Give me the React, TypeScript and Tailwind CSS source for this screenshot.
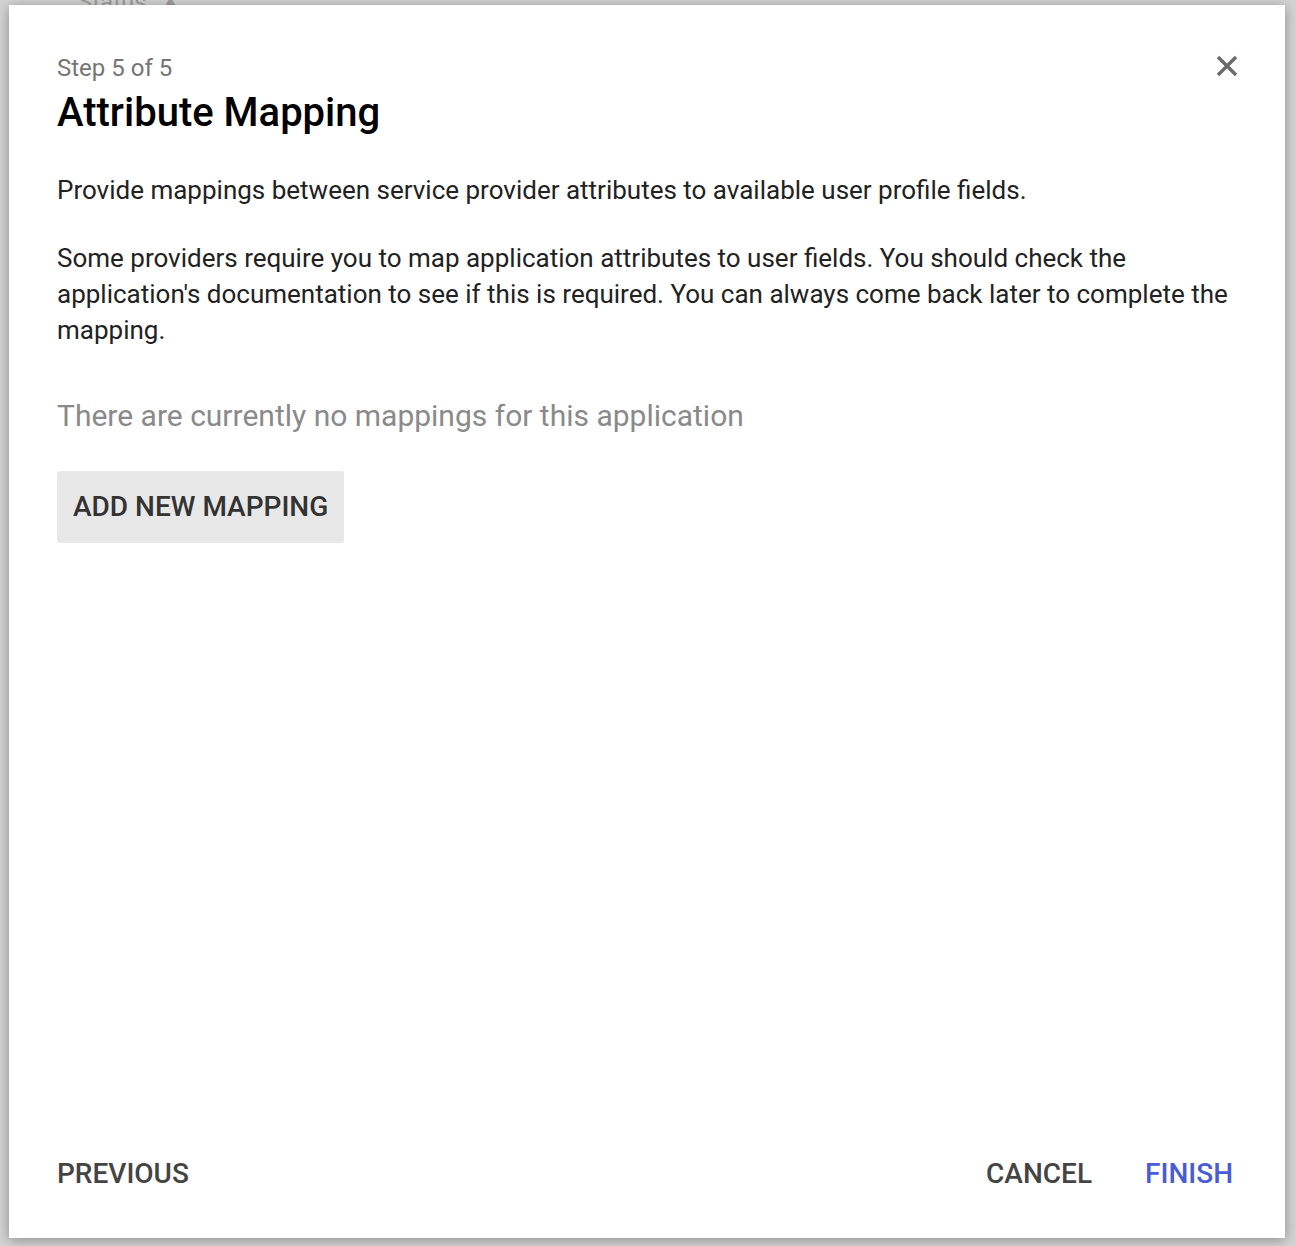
import React from "react";

export default function App() {
  return (
    <div className="w-[1296px] h-[1246px] bg-[#d4d4d4] relative overflow-hidden" style={{ fontFamily: "Roboto, 'Liberation Sans', sans-serif" }}>
      <div className="absolute left-[78px] -top-[16px] text-[24px] text-[#9e9e9e]">Status&nbsp;&nbsp;▲</div>
      <div className="absolute left-[9px] top-[5px] w-[1276px] h-[1233px] bg-white shadow-[0_2px_12px_rgba(0,0,0,0.35)] flex flex-col">
        <div className="flex items-start justify-between pl-[48px] pr-[48px] pt-[48px]">
          <div>
            <div className="text-[24px] leading-[30px] text-[#757575]">Step 5 of 5</div>
            <h1 className="mt-[7px] text-[40px] leading-[46px] font-medium text-black">Attribute Mapping</h1>
          </div>
          <button className="mt-[1px] -mr-[2px] text-[#6b6b6b] w-[24px] h-[24px] flex items-center justify-center">
            <svg width="24" height="24" viewBox="0 0 24 24" fill="none" stroke="currentColor" strokeWidth="3.4" strokeLinecap="butt">
              <path d="M3 3L21 21M21 3L3 21" />
            </svg>
          </button>
        </div>
        <div className="pl-[48px] pr-[48px] text-[26px] leading-[36px] text-[#222]">
          <p className="mt-[36px]">Provide mappings between service provider attributes to available user profile fields.</p>
          <p className="mt-[32px]">Some providers require you to map application attributes to user fields. You should check the application's documentation to see if this is required. You can always come back later to complete the mapping.</p>
          <p className="mt-[50px] text-[30px] leading-[36px] text-[#8a8a8a]">There are currently no mappings for this application</p>
          <button className="mt-[37px] h-[72px] px-[16px] bg-[#e8e8e8] rounded-[3px] text-[28px] font-medium text-[#333]">ADD NEW MAPPING</button>
        </div>
        <div className="flex-1" />
        <div className="flex items-center justify-between pl-[48px] pr-[52px] pb-[43px]">
          <button className="text-[28px] font-medium text-[#444]">PREVIOUS</button>
          <div className="flex items-center gap-[53px]">
            <button className="text-[28px] font-medium text-[#444]">CANCEL</button>
            <button className="text-[28px] font-medium text-[#4a5bd6]">FINISH</button>
          </div>
        </div>
      </div>
    </div>
  );
}
